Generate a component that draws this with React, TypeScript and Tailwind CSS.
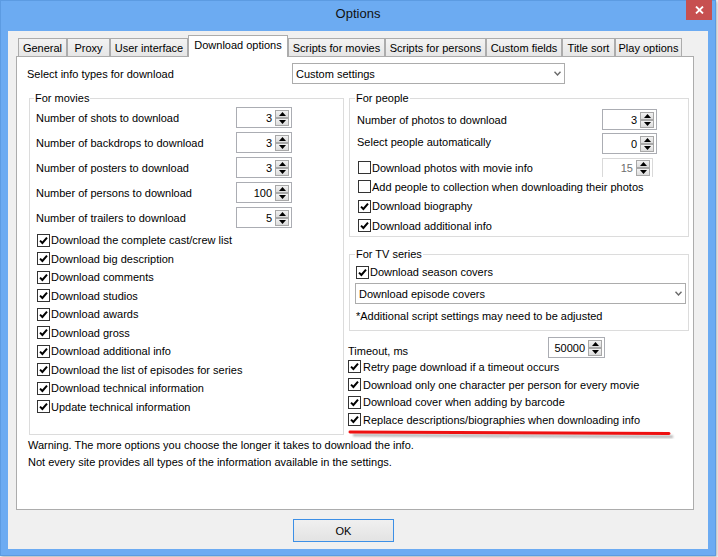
import React from "react";

function Check({ checked }: { checked?: boolean }) {
  return (
    <span className="w-[13px] h-[13px] border border-[#333333] bg-white flex items-center justify-center shrink-0">
      {checked && (
        <svg width="9" height="9" viewBox="0 0 9 9">
          <path d="M1 4.6 L3.4 7 L8 1.6" fill="none" stroke="#000" strokeWidth="2" />
        </svg>
      )}
    </span>
  );
}

function Arrows() {
  return (
    <div className="flex flex-col w-[14px] mr-[2px]">
      <div className="h-[8px] border border-[#a8a8a8] bg-linear-to-b from-[#f2f2f2] to-[#dcdcdc] flex items-center justify-center">
        <svg width="7" height="4" viewBox="0 0 7 4">
          <path d="M0 4 L3.5 0 L7 4Z" fill="#000" />
        </svg>
      </div>
      <div className="h-[8px] border border-[#a8a8a8] bg-linear-to-b from-[#f2f2f2] to-[#dcdcdc] flex items-center justify-center">
        <svg width="7" height="4" viewBox="0 0 7 4">
          <path d="M0 0 L3.5 4 L7 0Z" fill="#000" />
        </svg>
      </div>
    </div>
  );
}

function Spinner({ value, cls }: { value: string; cls: string }) {
  return (
    <div className={`h-[21px] border border-[#abadb3] bg-white flex items-center justify-end shrink-0 ${cls}`}>
      <span className="mr-[3px] leading-[14px]">{value}</span>
      <Arrows />
    </div>
  );
}

function Combo({ text, cls }: { text: string; cls: string }) {
  return (
    <div className={`h-[21px] border border-[#acacac] bg-white flex items-center justify-between pl-[3px] pr-[3px] ${cls}`}>
      <span className="leading-[14px]">{text}</span>
      <svg width="7" height="5" viewBox="0 0 7 5">
        <path d="M0.5 0.8 L3.5 4 L6.5 0.8" fill="none" stroke="#6a6a6a" strokeWidth="1.4" />
      </svg>
    </div>
  );
}

function CheckRow({ label, checked, cls }: { label: string; checked?: boolean; cls: string }) {
  return (
    <div className={`flex items-center gap-[1px] ${cls}`}>
      <Check checked={checked} />
      <span className="leading-[14px] whitespace-nowrap">{label}</span>
    </div>
  );
}

const tabs = [
  { t: "General", w: "w-[49px]" },
  { t: "Proxy", w: "w-[43px]" },
  { t: "User interface", w: "w-[78px]" },
  { t: "Download options", w: "w-[100px]", sel: true },
  { t: "Scripts for movies", w: "w-[97px]" },
  { t: "Scripts for persons", w: "w-[101px]" },
  { t: "Custom fields", w: "w-[76px]" },
  { t: "Title sort", w: "w-[53px]" },
  { t: "Play options", w: "w-[67px]" },
];

const movieSpins = [
  ["Number of shots to download", "3"],
  ["Number of backdrops to download", "3"],
  ["Number of posters to download", "3"],
  ["Number of persons to download", "100"],
  ["Number of trailers to download", "5"],
];

const movieChecks = [
  "Download the complete cast/crew list",
  "Download big description",
  "Download comments",
  "Download studios",
  "Download awards",
  "Download gross",
  "Download additional info",
  "Download the list of episodes for series",
  "Download technical information",
  "Update technical information",
];

const bottomChecks = [
  "Retry page download if a timeout occurs",
  "Download only one character per person for every movie",
  "Download cover when adding by barcode",
  "Replace descriptions/biographies when downloading info",
];

export default function App() {
  return (
    <div className="w-[718px] h-[557px] bg-white font-['Liberation_Sans',Arial,sans-serif] text-[11px] text-black">
      <div className="relative w-[716px] h-[556px] bg-[#6cabf2] border border-[#5c9be2] flex flex-col pl-[7px] pr-[7px] shadow-[1px_1px_3px_rgba(0,0,0,0.35)]">
        {/* title bar */}
        <div className="h-[30px] flex items-center justify-center pb-[4px]">
          <span className="text-[13px] text-[#111]">Options</span>
        </div>
        <div className="absolute top-[-1px] right-[3px] w-[26px] h-[20px] bg-[#c75050] flex items-center justify-center">
          <svg width="9" height="8" viewBox="0 0 9 8">
            <path d="M1 0.5 L8 7.5 M8 0.5 L1 7.5" stroke="#fff" strokeWidth="1.8" />
          </svg>
        </div>

        {/* client area */}
        <div className="h-[518px] bg-[#f0f0f0] flex flex-col">
          <div className="ml-[8px] w-[678px] flex flex-col">
            {/* tabs */}
            <div className="mt-[4px] h-[21px] flex items-start pl-[2px]">
              {tabs.map((tb) =>
                tb.sel ? (
                  <div
                    key={tb.t}
                    className={`relative z-10 h-[22px] ${tb.w} bg-white border border-b-0 border-[#acacac] flex items-center justify-center pb-[3px] shrink-0`}
                  >
                    <span className="leading-[14px] whitespace-nowrap">{tb.t}</span>
                  </div>
                ) : (
                  <div
                    key={tb.t}
                    className={`mt-[3px] h-[18px] ${tb.w} bg-linear-to-b from-[#f3f3f3] to-[#e6e6e6] border border-b-0 border-[#acacac] flex items-center justify-center shrink-0`}
                  >
                    <span className="leading-[14px] whitespace-nowrap">{tb.t}</span>
                  </div>
                )
              )}
            </div>

            {/* panel */}
            <div className="relative h-[454px] border border-[#acacac] bg-white">
              <div className="flex items-center mt-[6px] h-[21px]">
                <span className="ml-[10px] w-[265px] leading-[14px]">Select info types for download</span>
                <Combo text="Custom settings" cls="w-[273px]" />
              </div>

              <div className="flex mt-[7px]">
                {/* left group */}
                <fieldset className="ml-[12px] w-[315px] h-[344px] border border-[#dcdcdc]">
                  <legend className="ml-[4px] px-[1px] leading-[14px]">For movies</legend>
                  <div className="flex flex-col gap-[4px] mt-[2px] pl-[6px] pr-[51px]">
                    {movieSpins.map(([l, v]) => (
                      <div key={l} className="flex items-center justify-between h-[21px]">
                        <span className="leading-[14px]">{l}</span>
                        <Spinner value={v} cls="w-[56px]" />
                      </div>
                    ))}
                  </div>
                  <div className="flex flex-col mt-[3px] pl-[7px]">
                    {movieChecks.map((c) => (
                      <CheckRow key={c} label={c} checked cls="h-[18.5px]" />
                    ))}
                  </div>
                </fieldset>

                {/* right column */}
                <div className="ml-[5px] w-[340px] flex flex-col">
                  <fieldset className="h-[146px] border border-[#dcdcdc]">
                    <legend className="ml-[5px] px-[1px] leading-[14px]">For people</legend>
                    <div className="flex flex-col gap-[3px] mt-[4px] pl-[7px] pr-[31px]">
                      <div className="flex items-center justify-between h-[21px]">
                        <span className="leading-[14px]">Number of photos to download</span>
                        <Spinner value="3" cls="w-[55px]" />
                      </div>
                      <div className="flex items-center justify-between h-[21px]">
                        <span className="leading-[14px] -mt-[3px]">Select people automatically</span>
                        <Spinner value="0" cls="w-[55px]" />
                      </div>
                    </div>
                    <div className="flex flex-col mt-[4px] pl-[8px]">
                      <div className="flex items-center justify-between h-[19.3px] pr-[35px]">
                        <CheckRow label="Download photos with movie info" cls="" />
                        <div className="h-[19px] w-[51px] border border-b-0 border-[#d9d9d9] bg-white flex items-center justify-end -mt-[1px]">
                          <span className="mr-[3px] leading-[14px] text-[#6d6d6d]">15</span>
                          <Arrows />
                        </div>
                      </div>
                      <CheckRow label="Add people to collection when downloading their photos" cls="h-[19.3px]" />
                      <CheckRow label="Download biography" checked cls="h-[19.3px]" />
                      <CheckRow label="Download additional info" checked cls="h-[19.3px]" />
                    </div>
                  </fieldset>

                  <fieldset className="mt-[10px] h-[84px] border border-[#dcdcdc]">
                    <legend className="ml-[5px] px-[1px] leading-[14px]">For TV series</legend>
                    <CheckRow label="Download season covers" checked cls="h-[18px] mt-[2px] pl-[6px]" />
                    <Combo text="Download episode covers" cls="mt-[2px] ml-[5px] mr-[2px]" />
                    <div className="mt-[5px] pl-[6px] leading-[14px]">*Additional script settings may need to be adjusted</div>
                  </fieldset>

                  <div className="mt-[6px] h-[21px] flex items-end -ml-[1px]">
                    <span className="w-[200px] leading-[14px]">Timeout, ms</span>
                    <Spinner value="50000" cls="w-[57px]" />
                  </div>
                  <div className="flex flex-col -ml-[1px]">
                    {bottomChecks.map((c) => (
                      <CheckRow key={c} label={c} checked cls="h-[17.7px] gap-[2px]" />
                    ))}
                  </div>
                </div>
              </div>

              <div className="mt-[2px] pl-[11px] leading-[17px]">
                <div>Warning. The more options you choose the longer it takes to download the info.</div>
                <div>Not every site provides all types of the information available in the settings.</div>
              </div>

              {/* red underline annotation */}
              <svg className="absolute left-[331px] top-[371px]" width="336" height="12" viewBox="0 0 336 12">
                <defs>
                  <filter id="blr" x="-5%" y="-100%" width="110%" height="300%">
                    <feGaussianBlur stdDeviation="1.2" />
                  </filter>
                </defs>
                <path d="M5 7 Q165 7.5 325 8.8" stroke="#7a7a7a" strokeWidth="2.5" fill="none" opacity="0.6" filter="url(#blr)" />
                <path d="M2 4 Q160 4.5 321 5.5" stroke="#ee1111" strokeWidth="3" strokeLinecap="round" fill="none" />
              </svg>
            </div>

            {/* OK button */}
            <div className="mt-[9px] ml-[277px] w-[101px] h-[23px] border border-[#3c8fe6] bg-linear-to-b from-[#f0f0f0] to-[#e3e3e3] flex items-center justify-center">
              <span className="leading-[14px]">OK</span>
            </div>
          </div>
        </div>
      </div>
    </div>
  );
}
